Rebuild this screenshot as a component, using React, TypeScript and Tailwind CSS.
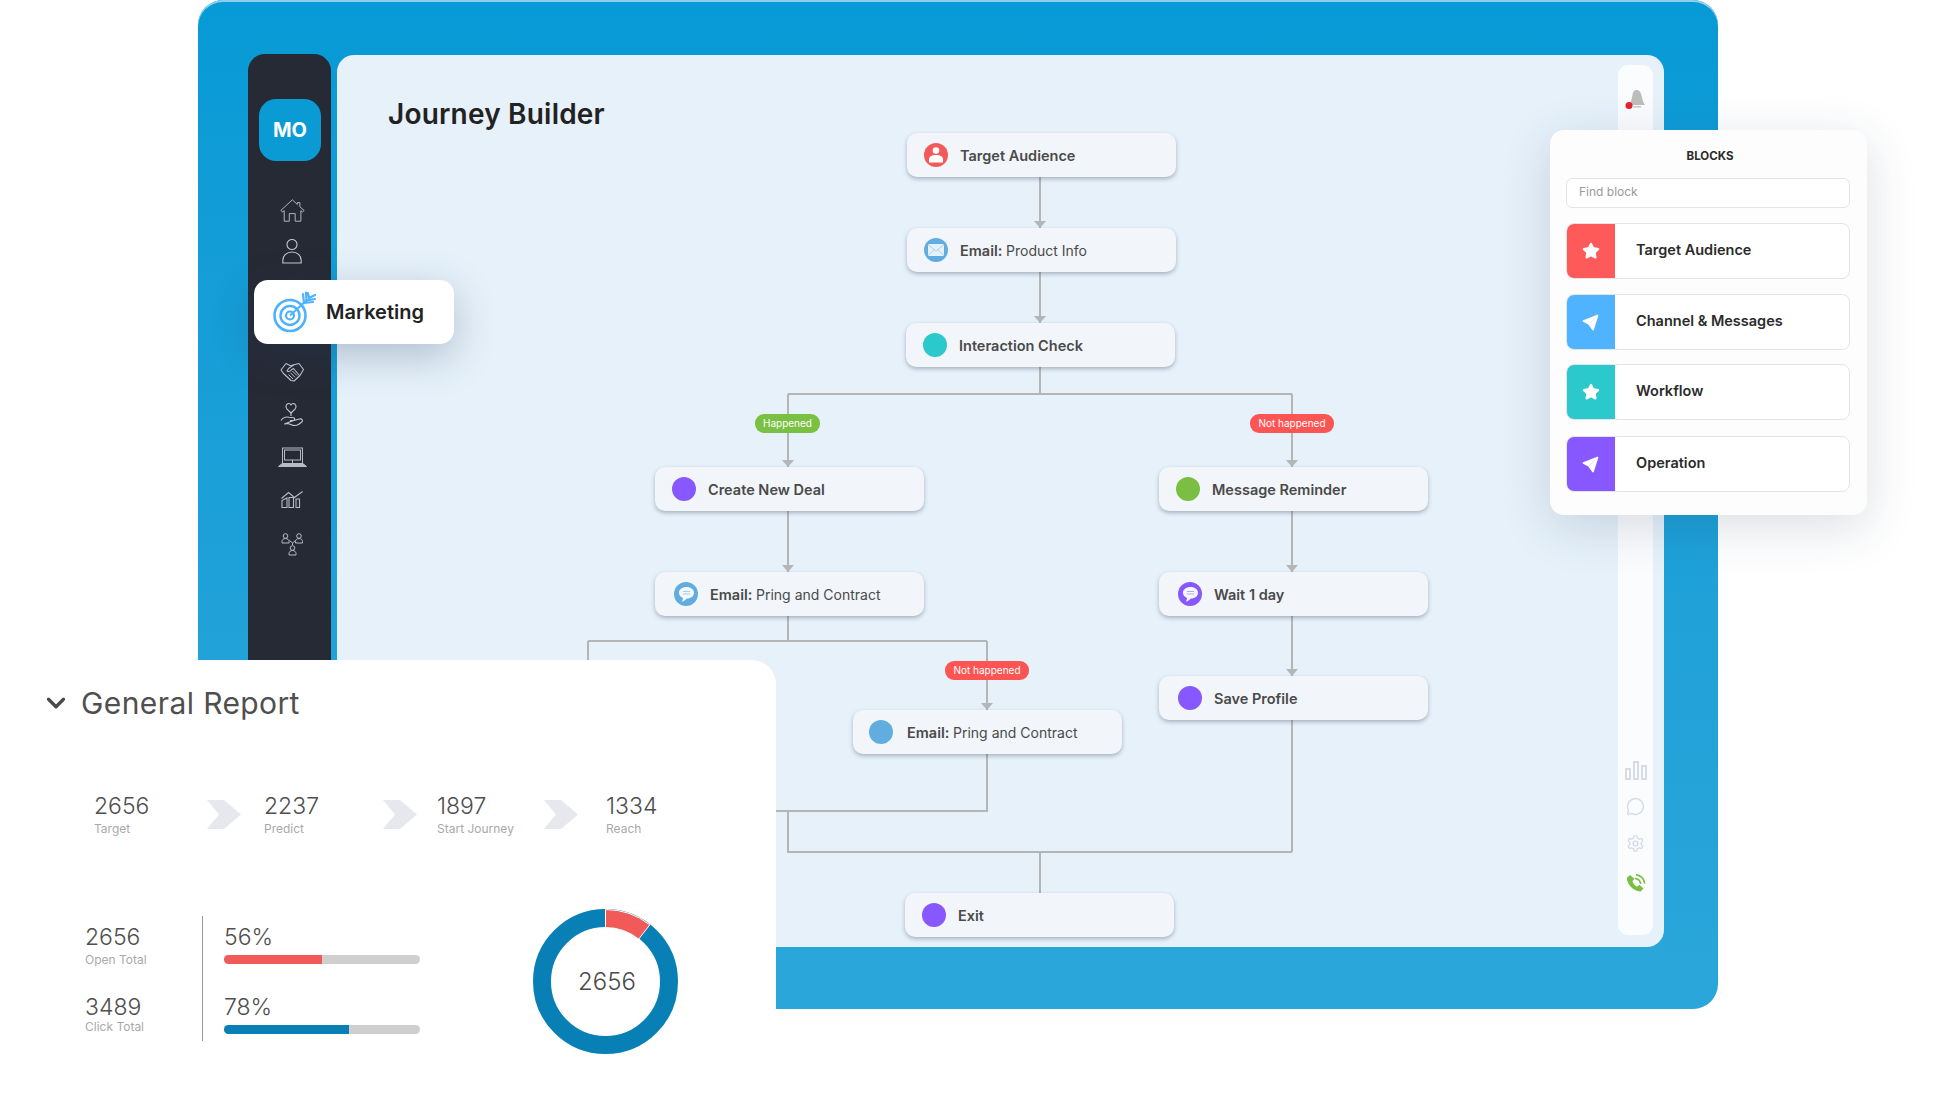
import { ChevronDown, MessageCircle, Settings, Star } from "lucide-react";
import type { ReactNode } from "react";

function Plane() {
  return (
    <svg width="17" height="17" viewBox="0 0 17 17" aria-hidden="true">
      <path d="M15.500 1.500 1.500 7 6.800 9.800 11 15.500Z" fill="#fff" stroke="#fff" strokeWidth="1.800" strokeLinejoin="round" />
      <path d="M13 4 7.500 9.500" stroke="#000" strokeOpacity="0.12" strokeWidth="0.8" />
    </svg>
  );
}

function HomeIcon() {
  return (
    <svg width="25" height="23" viewBox="0 0 25 23" fill="none" stroke="#aeb4bf" strokeWidth="1" strokeLinejoin="round" aria-hidden="true">
      <path d="M.8 11.500 12.300.8l5 4.600V3.600h2.600v4.200l4.300 3.700-1.800 1.400-1.500-1.300v10.600h-5.700v-7.600H9.300v7.600H4.200V11.600l-1.500 1.300Z" />
    </svg>
  );
}

function PersonIcon() {
  return (
    <svg width="20" height="25" viewBox="0 0 20 25" fill="none" stroke="#c3c8d0" strokeWidth="1.100" aria-hidden="true">
      <circle cx="10" cy="5.500" r="5" />
      <path d="M.8 24v-2.500c0-5 4-8.500 9.200-8.500s9.200 3.500 9.200 8.500V24Z" strokeLinejoin="round" />
    </svg>
  );
}

function HandshakeIcon() {
  return (
    <svg width="24" height="20" viewBox="0 0 24 20" fill="none" stroke="#c3c8d0" strokeWidth="1.100" strokeLinejoin="round" aria-hidden="true">
      <path d="M6 1.500 1 8l2.500 3.500 7.500 7 3 .5 6-5.500 3.500-6-4.500-6L14 2.800 10.500 3.800Z" />
      <path d="M14 2.800 8.500 6.500 7 9c1.500.8 3.200.5 4.300-1l2.200-1.500 6 7" />
      <path d="M8.500 12.500l4.500 4.500M10.500 10.800l4.500 4.500M12.500 9l4.500 4.500" strokeWidth="1" />
    </svg>
  );
}

function HandHeartIcon() {
  return (
    <svg width="24" height="25" viewBox="0 0 24 25" fill="none" stroke="#c3c8d0" strokeWidth="1.100" strokeLinejoin="round" aria-hidden="true">
      <path d="M11 11 6.800 6.800C5 4.800 6.300 1.500 8.800 1.500c1 0 1.700.6 2.200 1.400.5-.8 1.200-1.400 2.200-1.400 2.500 0 3.800 3.300 2 5.300Z" />
      <path d="M11 11v3" />
      <path d="M1 18.500c2-2.800 5-4 8-3.300l4.500.5c1.700.2 1.700 2.800 0 2.800H10" />
      <path d="M13.500 18.500l6-1.500c2.500-.6 3.800 1.500 2.300 3l-3.300 2.500c-2 1-4.500 1.300-6.500.5l-4-1.500-3.500.5Z" />
    </svg>
  );
}

function LaptopIcon() {
  return (
    <svg width="29" height="21" viewBox="0 0 29 21" fill="none" stroke="#b6bbc4" strokeWidth="1" aria-hidden="true">
      <rect x="4.500" y="1" width="20" height="15.500" />
      <rect x="6.500" y="3" width="16" height="10" />
      <path d="M14.500 13v3.500" />
      <path d="M3.500 17h22l3 2.500H.5Z" fill="#b6bbc4" />
    </svg>
  );
}

function ChartIcon() {
  return (
    <svg width="22" height="17" viewBox="0 0 22 17" fill="none" stroke="#b6bbc4" strokeWidth="1.100" aria-hidden="true">
      <path d="M1 16.500V9.500L6 7v9.500ZM8 16.500V6.500h4.500v10ZM15 16.500V8h3.500v8.500Z" />
      <path d="M.5 7.500 7.500 1.500l6 5 8-6" />
    </svg>
  );
}

function TeamIcon() {
  const person = (x: number, y: number) => (
    <g key={`${x}-${y}`}>
      <circle cx={x} cy={y} r="2.300" />
      <path d={`M${x - 3.500} ${y + 7}v-1.500c0-1.700 1.500-3 3.500-3s3.500 1.300 3.500 3v1.500Z`} />
    </g>
  );
  return (
    <svg width="23" height="24" viewBox="0 0 23 24" fill="none" stroke="#b6bbc4" strokeWidth="1" aria-hidden="true">
      {person(4.500, 3)}
      {person(18, 3)}
      {person(11.500, 15)}
      <path d="M8.500 7.500 11.500 10l3-2.500M11.500 10v2" />
    </svg>
  );
}

function TargetIcon() {
  return (
    <svg width="44" height="42" viewBox="0 0 44 42" fill="none" stroke="#4db2fd" aria-hidden="true">
      <circle cx="17" cy="24.500" r="15.500" strokeWidth="2.600" />
      <circle cx="17" cy="24.500" r="9.500" strokeWidth="2.400" />
      <circle cx="17" cy="24.500" r="4" strokeWidth="2.200" />
      <path d="M17 24.500 34 9" strokeWidth="2" />
      <path d="M31 12l-1-9M33.500 9.500 33 1.500M31 12l9-1M33.500 9.500 42 8M36 7l-1-5M36 7l6-3" strokeWidth="2.200" strokeLinecap="round" />
    </svg>
  );
}

function MailGlyph() {
  return (
    <svg width="16" height="12" viewBox="0 0 16 12" aria-hidden="true">
      <rect width="16" height="12" rx="1.500" fill="#e6f2fb" />
      <path d="M.5 1 8 7l7.500-6M.5 11 6 6M15.500 11 10 6" fill="none" stroke="#8cc4ea" strokeWidth="0.7" />
    </svg>
  );
}

function ChatGlyph({ line }: { line: string }) {
  return (
    <svg width="17" height="17" viewBox="0 0 17 17" aria-hidden="true">
      <path d="M8.500 1C4 1 1 3.500 1 6.800c0 2.400 1.600 4.300 4 5.200 0 1.500-.6 2.800-1.300 3.800 2-.5 3.800-1.600 5.300-3.200 4 0 7-2.500 7-5.800S13 1 8.500 1Z" fill="#f4f8fc" />
      <path d="M5 5.500h7M5 8h7" stroke={line} strokeWidth="1" />
    </svg>
  );
}

function PersonGlyph() {
  return (
    <svg width="14" height="16" viewBox="0 0 14 16" fill="#fff" aria-hidden="true">
      <circle cx="7" cy="3.500" r="3.300" />
      <path d="M0 15.500v-3C0 9.500 2.500 8 7 8s7 1.500 7 4.500v3Z" />
    </svg>
  );
}

function PhoneIcon() {
  return (
    <svg width="20" height="20" viewBox="0 0 20 20" fill="none" aria-hidden="true">
      <path d="M4 2 1 4.800C.3 10.500 7.500 18.800 14.500 18.500l3-3-4-3.700-2.500 2c-2-1-4-3.500-4.500-5.500l2-2.500Z" fill="#7abf43" />
      <path d="M9 5.500c3 .2 5.300 2.500 5.700 5.500M10 1.800c4.700.3 8.300 4 8.700 8.700" stroke="#7abf43" strokeWidth="1.700" />
    </svg>
  );
}

function Node({ className, dot, glyph, children }: { className: string; dot: string; glyph?: ReactNode; children: ReactNode }) {
  return (
    <div className={`absolute flex h-[44px] w-[269px] items-center rounded-[10px] bg-[#f2f6fa] pl-[17px] text-[14.500px] font-semibold text-[#4a4a4a] shadow-[0_2px_4px_rgba(50,60,80,0.35)] ${className}`}>
      <span className={`mr-[12px] flex size-[24px] shrink-0 items-center justify-center rounded-full ${dot}`}>{glyph}</span>
      <span className="pt-px">{children}</span>
    </div>
  );
}

function Badge({ className, children }: { className: string; children: ReactNode }) {
  return (
    <span className={`absolute flex h-[19px] items-center justify-center rounded-[9px] text-[10px] text-white ${className}`}>{children}</span>
  );
}

function Connectors() {
  const lines = [
    "M703 122V173", "M703 217V268", "M703 312V339", "M451 339H955", "M451 339V412", "M955 339V412",
    "M451 456V517", "M955 456V517", "M955 561V621", "M451 561V586", "M251 586H650", "M251 586V620",
    "M650 586V655", "M650 699V756H430", "M451 756V797H955", "M955 665V797", "M703 797V839",
  ];
  const arrows = [[703, 173], [703, 268], [451, 412], [955, 412], [451, 517], [955, 517], [955, 621], [650, 655]];
  return (
    <svg className="absolute left-0 top-0" width="1281" height="892" fill="none" aria-hidden="true">
      {lines.map((d) => (
        <path key={d} d={d} stroke="#b5b5b5" strokeWidth="2" />
      ))}
      {arrows.map(([x, y]) => (
        <path key={`${x}-${y}`} d={`M${x - 6} ${y - 7}h12l-6 7Z`} fill="#b5b5b5" />
      ))}
    </svg>
  );
}

const blocks = [
  { label: "Target Audience", color: "bg-[#ff5a5a]", icon: "star", row: "h-[56px]" },
  { label: "Channel & Messages", color: "bg-[#4fb3ff]", icon: "plane", row: "mt-[15px] h-[56px]" },
  { label: "Workflow", color: "bg-[#2bc8cc]", icon: "star", row: "mt-[14px] h-[56px]" },
  { label: "Operation", color: "bg-[#8758ff]", icon: "plane", row: "mt-[16px] h-[56px]" },
];

function BlocksPanel() {
  return (
    <aside className="absolute left-[1550px] top-[130px] h-[385px] w-[317px] rounded-[14px] bg-[#fdfdfd] px-[16px] pt-[17px] shadow-[0_12px_50px_rgba(30,50,80,0.16)]">
      <h2 className="pl-[3px] text-center text-[11.500px] leading-[18px] font-bold text-[#2b2b2b]">BLOCKS</h2>
      <div className="mt-[13px] flex h-[30px] w-[284px] items-center rounded-[6px] border border-[#e3e5e8] bg-white pb-[2px] pl-[12px] text-[12px] text-[#9a9a9a]">
        Find block
      </div>
      <div className="mt-[15px] w-[284px]">
        {blocks.map((block) => (
          <div key={block.label} className={`flex overflow-hidden rounded-[8px] border border-[#e3e5e8] bg-white ${block.row}`}>
            <span className={`-my-px -ml-px flex w-[49px] shrink-0 items-center justify-center ${block.color}`}>
              {block.icon === "star" ? <Star size={18} fill="#fff" stroke="#fff" strokeLinejoin="round" /> : <Plane />}
            </span>
            <span className="flex items-center pb-[2px] pl-[21px] text-[14.500px] font-semibold text-[#2b2b2b]">{block.label}</span>
          </div>
        ))}
      </div>
    </aside>
  );
}

function Sidebar() {
  return (
    <nav className="relative h-[892px] w-[83px] shrink-0 rounded-[17px] bg-[#262a35] pt-[45px]">
      <div className="ml-[11px] flex size-[62px] items-center justify-center rounded-[17px] bg-[#0a9ad4] text-[20px] font-bold text-white">
        MO
      </div>
      <div className="flex flex-col items-center pl-[5px]">
        <div className="mt-[38px]"><HomeIcon /></div>
        <div className="mt-[17px]"><PersonIcon /></div>
        <div className="mt-[98px]"><HandshakeIcon /></div>
        <div className="mt-[20px]"><HandHeartIcon /></div>
        <div className="mt-[20px]"><LaptopIcon /></div>
        <div className="mt-[23px]"><ChartIcon /></div>
        <div className="mt-[25px]"><TeamIcon /></div>
      </div>
      <div className="absolute left-[6px] top-[226px] z-10 flex h-[64px] w-[200px] items-center rounded-[14px] bg-white pl-[19px] shadow-[0_12px_40px_rgba(40,60,90,0.28)]">
        <TargetIcon />
        <span className="ml-[9px] text-[20px] font-semibold text-[#222]">Marketing</span>
      </div>
    </nav>
  );
}

function Canvas() {
  return (
    <div className="relative h-full w-[1281px] shrink-0">
      <h1 className="absolute left-[51px] top-[39px] text-[28px] leading-[40px] font-semibold tracking-[0.2px] text-[#222]">Journey Builder</h1>
      <Connectors />
      <Node className="left-[570px] top-[78px]" dot="bg-[#f25a5a]" glyph={<PersonGlyph />}>Target Audience</Node>
      <Node className="left-[570px] top-[173px]" dot="bg-[#62ade0]" glyph={<MailGlyph />}>
        Email: <span className="text-[14px] font-normal">Product Info</span>
      </Node>
      <Node className="left-[569px] top-[268px]" dot="bg-[#2bc8cc]">Interaction Check</Node>
      <Badge className="left-[418px] top-[359px] w-[65px] bg-[#7ac143]">Happened</Badge>
      <Badge className="left-[913px] top-[359px] w-[84px] bg-[#fd5454]">Not happened</Badge>
      <Node className="left-[318px] top-[412px]" dot="bg-[#8758ff]">Create New Deal</Node>
      <Node className="left-[822px] top-[412px]" dot="bg-[#7abf43]">Message Reminder</Node>
      <Node className="left-[318px] top-[517px] !pl-[19px]" dot="bg-[#62ade0]" glyph={<ChatGlyph line="#9fd0ef" />}>
        Email: <span className="text-[14px] font-normal">Pring and Contract</span>
      </Node>
      <Node className="left-[822px] top-[517px] !pl-[19px]" dot="bg-[#8758ff]" glyph={<ChatGlyph line="#b9a0ff" />}>Wait 1 day</Node>
      <Node className="left-[822px] top-[621px] !pl-[19px]" dot="bg-[#8758ff]">Save Profile</Node>
      <Badge className="left-[608px] top-[606px] w-[84px] bg-[#fd5454]">Not happened</Badge>
      <Node className="left-[516px] top-[655px] !pl-[16px]" dot="bg-[#62ade0]">
        <span className="ml-[2px]">Email:</span> <span className="text-[14px] font-normal">Pring and Contract</span>
      </Node>
      <Node className="left-[568px] top-[838px]" dot="bg-[#8758ff]">Exit</Node>
    </div>
  );
}

function RightRail() {
  return (
    <div className="mt-[10px] flex h-[870px] w-[35px] shrink-0 flex-col items-center justify-between rounded-[10px] bg-[#fbfcfe] pb-[42px] pt-[25px]">
      <svg width="22" height="20" viewBox="0 0 22 20" aria-hidden="true">
        <path d="M11.500 0c3 0 4.500 2.500 5 5.500.6 3.500 1.500 6.500 3.500 9.500H4c2-3 2.800-6 3.400-9.500C7.900 2.500 8.500 0 11.500 0Z" fill="#bdbdbd" />
        <rect x="8" y="16" width="8" height="1.500" fill="#c8c8c8" />
        <circle cx="4" cy="15.500" r="3.500" fill="#e8202a" />
      </svg>
      <div className="flex flex-col items-center">
        <svg width="22" height="19" viewBox="0 0 22 19" fill="none" stroke="#d5dce6" strokeWidth="2" aria-hidden="true">
          <rect x="1" y="8" width="4" height="10" />
          <rect x="9" y="1" width="4" height="17" />
          <rect x="17" y="5" width="4" height="13" />
        </svg>
        <MessageCircle className="mt-[17px] text-[#d5dce6]" size={19} strokeWidth={1.800} />
        <Settings className="mt-[18px] text-[#d5dce6]" size={19} strokeWidth={1.800} />
        <div className="mt-[20px]"><PhoneIcon /></div>
      </div>
    </div>
  );
}

const funnel = [
  { value: "2656", label: "Target", width: "w-[113px]" },
  { value: "2237", label: "Predict", width: "w-[119px]" },
  { value: "1897", label: "Start Journey", width: "w-[107px]" },
  { value: "1334", label: "Reach", width: "w-[80px]" },
];
const chevronGaps = ["mr-[23px]", "mr-[20px]", "mr-[28px]"];

function Chevron({ className }: { className: string }) {
  return (
    <svg className={className} width="34" height="29" viewBox="0 0 34 29" aria-hidden="true">
      <path d="M0 0h17l17 14.500L17 29H0l12-14.500Z" fill="#e6e8ed" />
    </svg>
  );
}

function Donut() {
  return (
    <div className="relative -mt-[1px] ml-[113px] size-[145px] shrink-0">
      <svg width="145" height="145" viewBox="0 0 145 145" aria-hidden="true">
        <circle cx="72.500" cy="72.500" r="63.500" fill="none" stroke="#0880b5" strokeWidth="18" />
        <path d="M72.500 0.500A72 72 0 0 1 116.800 15.800L105.700 30.100A54 54 0 0 0 72.500 18.500Z" fill="#f25a5a" stroke="#fff" strokeWidth="1" />
      </svg>
      <span className="absolute inset-0 flex items-center justify-center pl-[3px] text-[24px] font-light text-[#4a4a4a]">2656</span>
    </div>
  );
}

function GeneralReport() {
  return (
    <section className="absolute left-0 top-[660px] h-[444px] w-[776px] rounded-tr-[24px] bg-white pt-[25px] text-[#4f4f4f]">
      <header className="flex h-[36px] items-center pl-[41px]">
        <ChevronDown size={30} strokeWidth={2.600} className="text-[#4a4a4a]" />
        <h2 className="ml-[10px] text-[30px] leading-[36px] tracking-[0.4px]">General Report</h2>
      </header>

      <div className="ml-[94px] mt-[71px] flex items-center">
        {funnel.map((item, i) => (
          <div key={item.value} className="flex items-center">
            <div className={item.width}>
              <p className="text-[23px] leading-[28px] font-light">{item.value}</p>
              <p className="mt-px text-[12px] leading-[16px] text-[#a9a9a9]">{item.label}</p>
            </div>
            {i < 3 && <Chevron className={chevronGaps[i]} />}
          </div>
        ))}
      </div>

      <div className="ml-[85px] mt-[73px] flex">
        <div className="w-[117px] pt-[13px]">
          <p className="text-[23px] leading-[28px] font-light">2656</p>
          <p className="mt-px text-[12px] leading-[16px] text-[#a9a9a9]">Open Total</p>
          <p className="mt-[25px] text-[23px] leading-[28px] font-light">3489</p>
          <p className="-mt-[2px] text-[12px] leading-[16px] text-[#a9a9a9]">Click Total</p>
        </div>
        <div className="mt-[6px] h-[125px] w-px bg-[#9a9a9a]" />
        <div className="ml-[21px] w-[196px] pt-[13px]">
          <p className="text-[23px] leading-[28px] font-light">56%</p>
          <div className="mt-[4px] h-[9px] overflow-hidden rounded-full bg-[#cfcfcf]">
            <div className="h-full w-1/2 bg-[#f25a5a]" />
          </div>
          <p className="mt-[29px] text-[23px] leading-[28px] font-light">78%</p>
          <div className="mt-[4px] h-[9px] overflow-hidden rounded-full bg-[#cfcfcf]">
            <div className="h-full w-[64%] bg-[#0880b5]" />
          </div>
        </div>
        <Donut />
      </div>
    </section>
  );
}

export default function App() {
  return (
    <div className="relative h-[1104px] w-[1940px] overflow-hidden bg-white font-['Inter',sans-serif]">
      <div className="ml-[198px] flex h-[1009px] w-[1520px] gap-[6px] rounded-t-[25px] rounded-br-[25px] bg-gradient-to-b from-[#069ad6] to-[#2aa6da] pl-[50px] pt-[54px] shadow-[inset_0_2px_0_#8fcdec]">
        <Sidebar />
        <main className="mt-px flex h-[892px] w-[1327px] shrink-0 rounded-[17px] bg-[#e6f1fa]">
          <Canvas />
          <RightRail />
        </main>
      </div>
      <BlocksPanel />
      <GeneralReport />
    </div>
  );
}
